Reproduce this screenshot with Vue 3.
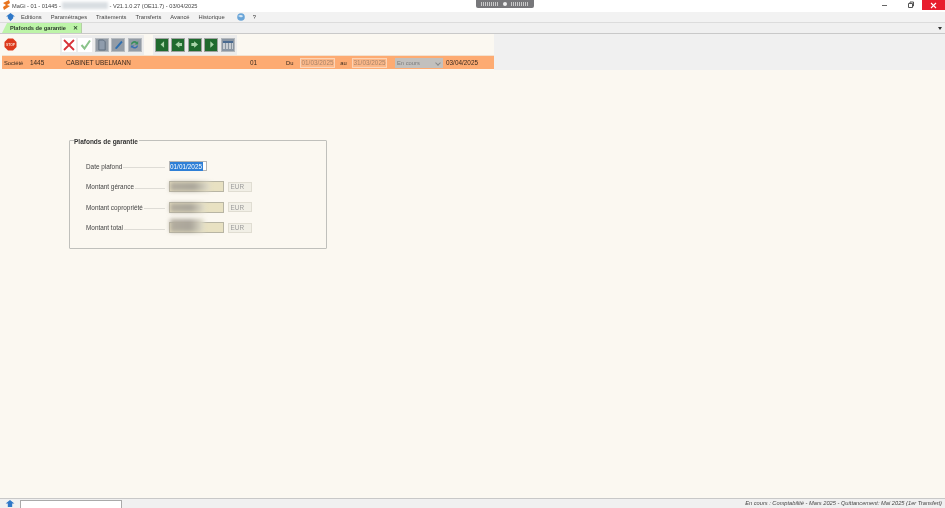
<script setup>
const menus = ['Editions', 'Paramétrages', 'Traitements', 'Transferts', 'Avancé', 'Historique']
const rows = [
  { label: 'Montant gérance', blur: 'b1' },
  { label: 'Montant copropriété', blur: 'b2' },
  { label: 'Montant total', blur: 'b3' }
]
const navs = [
  'M9 3 4.500 7 9 11zM3.500 3v8',
  'M8 3 3 7l5 4V9h3.500V5H8z',
  'M6.500 3l5 4-5 4V9H3V5h3.500z',
  'M5.500 3 10 7l-4.500 4zM11 3v8'
]
</script>

<template>
  <div class="app">
    <header class="title">
      <svg class="logo" width="9" height="10" viewBox="0 0 9 10"><path d="M7 0 1 3l3 2-3 2 1 3 6-4-3-1 3-2z" fill="#e8741e"/></svg>
      <span class="ttext">MaGi - 01 - 01445 -</span>
      <span class="tblur"></span>
      <span class="ttext"> - V21.1.0.27 (OE11.7) - 03/04/2025</span>
      <div class="pill"><i class="dots"></i><i class="pdot"></i><i class="dots"></i></div>
      <div class="winbtns">
        <svg width="22" height="11" viewBox="0 0 22 11"><path d="M4 5.500h5" stroke="#666"/></svg>
        <svg width="22" height="11" viewBox="0 0 22 11"><path d="M8.500 3.500h4v4h-4zM10 3.500V2h3.500v4H12.500" fill="none" stroke="#555"/></svg>
        <div class="close"><svg width="7" height="7" viewBox="0 0 7 7"><path d="M1 1l5 5M6 1 1 6" stroke="#fff" stroke-width="1.100"/></svg></div>
      </div>
    </header>

    <nav class="menu">
      <svg class="home" width="9" height="8" viewBox="0 0 10 9"><path d="M5 0 10 4H8v2L5 9 2 6V4H0z" fill="#2f78c8"/></svg>
      <span v-for="m in menus" :key="m" class="mi">{{ m }}</span>
      <svg class="globe" width="8" height="8" viewBox="0 0 8 8"><circle cx="4" cy="4" r="3.800" fill="#6aa5d8"/><path d="M1 3q3-2 5 0-1 2-3 1z" fill="#d5e7f5"/></svg>
      <span class="q">?</span>
    </nav>

    <div class="tabs">
      <div class="tab"><b>Plafonds de garantie</b><span class="tabx">✕</span></div>
      <span class="tabarrow"></span>
    </div>

    <div class="upper">
      <div class="upper-main">
        <div class="toolbar">
          <div class="btn stopb">
            <svg width="13" height="13" viewBox="0 0 13 13"><path d="M4 .5h5L12.500 4v5L9 12.500H4L.5 9V4z" fill="#dd3a1c"/><text x="6.500" y="8" text-anchor="middle" class="stoptxt">STOP</text></svg>
          </div>
          <div class="group g1">
            <div class="btn white"><svg width="14" height="14" viewBox="0 0 14 14"><path d="M2 2l10 10M12 2 2 12" stroke="#d8323a" stroke-width="1.800"/></svg></div>
            <div class="btn white"><svg width="13" height="13" viewBox="0 0 13 13"><path d="M2.500 7l3 3.500L11 2.500" fill="none" stroke="#8ac38a" stroke-width="2"/></svg></div>
            <div class="btn gray"><svg width="10" height="12" viewBox="0 0 11 13"><path d="M2 1h5l2 2v9H2z" fill="#8f9cac" stroke="#5e6c7c"/></svg></div>
            <div class="btn gray"><svg width="11" height="11" viewBox="0 0 12 12"><path d="M2 10 9 2l1.500 1.500L4 11z" fill="#2f6fb0"/></svg></div>
            <div class="btn gray"><svg width="11" height="11" viewBox="0 0 12 12"><path d="M2 6a4 4 0 0 1 7-2.500L10 2v4H6l1.500-1.200A2.500 2.500 0 0 0 3.500 6z" fill="#3b8f5c"/><path d="M10 7a4 4 0 0 1-7 2L2 10V7h4L4.500 8.200A2.500 2.500 0 0 0 8.500 7z" fill="#3a70b0"/></svg></div>
          </div>
          <div class="group g2">
            <div v-for="d in navs" :key="d" class="btn navb">
              <svg width="11" height="11" viewBox="0 0 14 14"><path :d="d" fill="#a9d3a9"/></svg>
            </div>
            <div class="btn calb"><i class="calhead"></i><i class="calbody"></i></div>
          </div>
        </div>
        <div class="info">
          <span class="i-soc">Société</span>
          <span class="i-num">1445</span>
          <span class="i-name">CABINET UBELMANN</span>
          <span class="i-ex">01</span>
          <span class="i-du">Du</span>
          <span class="dbox">01/03/2025</span>
          <span class="i-au">au</span>
          <span class="dbox">31/03/2025</span>
          <span class="sel">En cours<i class="chev"></i></span>
          <span class="i-end">03/04/2025</span>
        </div>
      </div>
      <div class="upper-side"></div>
    </div>

    <main class="main">
      <section class="gb">
        <h2 class="legend">Plafonds de garantie</h2>
        <div class="row first">
          <span class="lab"><span>Date plafond</span><i class="lead"></i></span>
          <span class="dateinput"><span class="selected">01/01/2025</span></span>
        </div>
        <div v-for="r in rows" :key="r.label" class="row">
          <span class="lab"><span>{{ r.label }}</span><i class="lead"></i></span>
          <span class="amount"><i :class="['smudge', r.blur]"></i></span>
          <span class="cur">EUR</span>
        </div>
      </section>
    </main>

    <footer class="status">
      <svg class="sarrow" width="10" height="7" viewBox="0 0 10 8"><path d="M5 0 10 4H7.500v4h-5V4H0z" fill="#2f78c8"/></svg>
      <div class="sbox"></div>
      <div class="stext">En cours : Comptabilité - Mars 2025 - Quittancement: Mai 2025 (1er Transfert)</div>
    </footer>
  </div>
</template>

<style>
html, body { margin: 0; padding: 0; background: #fbf8f1; }
</style>

<style scoped>
.app { width: 945px; height: 508px; display: flex; flex-direction: column; overflow: hidden; font-family: "Liberation Sans", Arial, sans-serif; font-size: 6.400px; color: #333; background: #fbf8f1; filter: blur(.3px); }
.title { height: 12px; flex: none; background: #fff; display: flex; align-items: center; padding-left: 2px; position: relative; white-space: pre; }
.logo { margin: 0 1px 2px 0; }
.ttext { font-size: 5.650px; margin-bottom: 1px; color: #444; }
.tblur { width: 46px; height: 7px; margin: 0 0 1px 1px; background: #d9dee2; filter: blur(1.500px); }
.pill { position: absolute; left: 476px; top: 0; width: 58px; height: 7.500px; background: #77777a; border-radius: 0 0 2px 2px; display: flex; align-items: center; justify-content: center; gap: 4px; }
.dots { width: 18px; height: 4px; background: repeating-linear-gradient(90deg, #c9c9c9 0 1px, transparent 1px 2px); }
.pdot { width: 4px; height: 4px; border-radius: 50%; background: #eee; }
.winbtns { position: absolute; right: 0; top: 0; display: flex; height: 11px; }
.close { width: 23px; height: 10px; background: #e81d2d; display: flex; align-items: center; justify-content: center; }

.menu { height: 10px; flex: none; background: #f2f2f2; border-bottom: 1px solid #dcdcdc; display: flex; align-items: center; position: relative; padding-left: 6px; }
.home { margin-right: 6px; }
.mi { margin-right: 9px; color: #444; font-size: 5.800px; }
.globe { margin-left: 3px; }
.q { margin-left: 8px; font-size: 5.800px; }

.tabs { height: 10px; flex: none; background: #f0f0f0; border-bottom: 1px solid #c9c9c9; display: flex; align-items: flex-end; justify-content: space-between; padding-left: 2px; }
.tab { width: 80px; height: 10px; box-sizing: border-box; background: #bdf4a8; clip-path: polygon(5px 0, 100% 0, 100% 100%, 0 100%); display: flex; align-items: center; padding: 0 3px 0 8px; justify-content: space-between; border-right: 1px solid #b5cfa5; }
.tab b { font-size: 5.700px; color: #2c3a2c; }
.tabx { font-size: 5.500px; font-weight: bold; color: #2c4a2c; }
.tabarrow { width: 0; height: 0; border: 2px solid transparent; border-top: 3px solid #333; border-bottom: 0; margin: 0 3px 3px 0; }

.upper { display: flex; height: 36px; flex: none; }
.upper-main { width: 494px; flex: none; display: flex; flex-direction: column; }
.upper-side { flex: 1; background: #f0f0f0; }
.toolbar { height: 21px; flex: none; display: flex; align-items: center; padding-left: 2px; box-sizing: border-box; }
.btn { width: 14px; height: 14px; flex: none; display: flex; align-items: center; justify-content: center; box-sizing: border-box; }
.stopb { width: 16px; height: 16px; }
.stoptxt { font-size: 3.400px; font-weight: bold; fill: #f9ddd0; font-family: "Liberation Sans", Arial, sans-serif; }
.group { height: 20px; display: flex; align-items: center; gap: 2.400px; background: #ececec; padding: 0 2px; box-sizing: border-box; }
.g1 { margin-left: 42px; width: 84px; }
.g2 { margin-left: 9px; width: 84px; }
.white { background: #fff; }
.gray { background: #939ca6; border: 1px solid #b8bcc0; }
.navb { background: #1f6a2e; border: 1.500px solid #a0a3a0; }
.calb { background: #8a96a3; border: 1.500px solid #b4b8bc; flex-direction: column; padding: 2px 1px; }
.calhead { width: 100%; height: 2px; background: #4a6a90; }
.calbody { width: 100%; flex: 1; background: repeating-linear-gradient(90deg, #c9ced3 0 2px, #8a96a2 2px 3px); }

.info { height: 13px; flex: none; background: #fdab72; margin-left: 2px; display: flex; align-items: center; color: #3a2a1e; border-top: 1px solid #f3e2d0; }
.i-soc { margin-left: 2px; width: 26px; font-size: 5.800px; }
.i-num { width: 36px; }
.i-name { width: 184px; }
.i-ex { width: 36px; }
.i-du { width: 14px; font-size: 5.800px; }
.dbox { width: 35px; height: 10px; background: #fbb889; border: 1px solid #fbd4b6; box-sizing: border-box; color: #a98468; display: flex; align-items: center; justify-content: center; }
.i-au { width: 17px; text-align: center; font-size: 5.800px; }
.sel { width: 48px; height: 10px; margin-left: 8px; background: #c2c0bd; color: #7c7c7c; display: flex; align-items: center; padding-left: 2px; box-sizing: border-box; position: relative; font-size: 5.800px; }
.chev { position: absolute; right: 3px; top: 3px; width: 3px; height: 3px; border: solid #8a8a8a; border-width: 0 1px 1px 0; transform: rotate(45deg); }
.i-end { margin-left: 3px; }

.main { flex: 1; min-height: 0; background: #fbf8f1; padding: 70px 0 0 69px; box-sizing: border-box; border-bottom: 1px solid #c8c8c8; }
.gb { width: 258px; height: 109px; box-sizing: border-box; border: 1px solid #c0c0bc; border-radius: 1px; padding: 20px 0 0 16px; position: relative; }
.legend { position: absolute; left: 4px; top: -3px; margin: 0; font-size: 6.500px; font-weight: bold; background: #fbf8f1; padding-right: 1px; color: #333; line-height: 8px; }
.row { display: flex; align-items: center; height: 10.500px; margin-top: 10px; }
.row.first { margin-top: 0; }
.lab { width: 83px; display: flex; align-items: flex-end; flex: none; }
.lab > span { color: #444; }
.lead { flex: 1; margin: 0 4px 1.500px 1px; border-bottom: 1px solid #dedcd6; }
.dateinput { width: 38px; height: 10px; background: #fff; border: 1px solid #b5b5b5; box-sizing: border-box; display: flex; align-items: center; }
.selected { background: #2f7fd6; color: #fff; width: 33px; height: 9px; line-height: 9px; overflow: hidden; white-space: nowrap; }
.amount { width: 55px; height: 11px; background: #e8e1c2; border: 1px solid #b8b5a4; box-sizing: border-box; position: relative; }
.smudge { position: absolute; left: 0; top: 0; bottom: 0; background: linear-gradient(90deg, #b3ad9f, #aaa59a 60%, #e4e0cc); filter: blur(2px); }
.b1 { width: 40px; }
.b2 { width: 35px; }
.b3 { width: 34px; top: -4px; }
.cur { width: 24px; height: 10px; margin-left: 4px; background: #f1efe6; border: 1px solid #e0ddd2; box-sizing: border-box; color: #9a9a9a; display: flex; align-items: center; padding-left: 1.500px; }

.status { height: 9px; flex: none; background: #f0f0f0; display: flex; align-items: center; padding-left: 5px; position: relative; }
.sarrow { margin-right: 5px; }
.sbox { width: 102px; height: 8px; align-self: flex-end; background: #fff; border: 1px solid #aaa; border-bottom: 0; box-sizing: border-box; }
.stext { position: absolute; right: 3px; top: 1px; font-size: 5.700px; font-style: italic; color: #444; white-space: nowrap; }
</style>
